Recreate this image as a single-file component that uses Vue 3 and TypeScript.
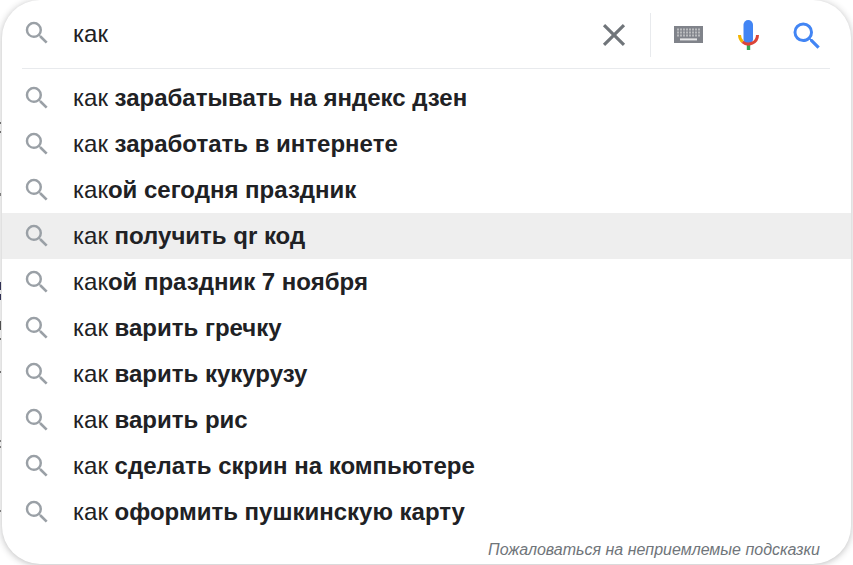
<script setup lang="ts">
interface Row { pre: string; bold: string; active?: boolean }
const rows: Row[] = [
  { pre: 'как ', bold: 'зарабатывать на яндекс дзен' },
  { pre: 'как ', bold: 'заработать в интернете' },
  { pre: 'как', bold: 'ой сегодня праздник' },
  { pre: 'как ', bold: 'получить qr код', active: true },
  { pre: 'как', bold: 'ой праздник 7 ноября' },
  { pre: 'как ', bold: 'варить гречку' },
  { pre: 'как ', bold: 'варить кукурузу' },
  { pre: 'как ', bold: 'варить рис' },
  { pre: 'как ', bold: 'сделать скрин на компьютере' },
  { pre: 'как ', bold: 'оформить пушкинскую карту' },
]
const glass = 'M15.5 14h-.79l-.28-.27A6.47 6.47 0 0 0 16 9.5 6.5 6.5 0 1 0 9.5 16c1.61 0 3.09-.59 4.23-1.57l.27.28v.79l5 4.99L20.49 19l-4.99-5zm-6 0C7.01 14 5 11.99 5 9.5S7.01 5 9.5 5 14 7.01 14 9.5 11.99 14 9.5 14z'
// Bits of the page behind the dropdown that peek out at its left edge
const specks = [
  { y: 122, h: 2, c: '#777' },
  { y: 131, h: 2, c: '#777' },
  { y: 193, h: 3, c: '#888' },
  { y: 282, h: 8, c: '#33335a' },
  { y: 294, h: 6, c: '#33335a' },
  { y: 321, h: 9, c: '#555' },
  { y: 338, h: 2, c: '#777' },
  { y: 371, h: 2, c: '#777' },
  { y: 440, h: 2, c: '#888' },
  { y: 446, h: 2, c: '#888' },
  { y: 510, h: 2, c: '#888' },
]
</script>

<template>
  <div class="page">
    <span
      v-for="s in specks"
      :key="s.y"
      class="speck"
      :style="{ top: s.y + 'px', height: s.h + 'px', background: s.c }"
    ></span>
    <div class="card">
      <div class="top">
        <div class="bar">
          <svg class="ico up" viewBox="0 0 24 24"><path :d="glass" fill="#9aa0a6" /></svg>
          <span class="query">как</span>
          <div class="tools">
            <svg class="clear" viewBox="0 0 24 24"><path fill="#70757a" d="M19 6.41 17.59 5 12 10.59 6.41 5 5 6.41 10.59 12 5 17.59 6.41 19 12 13.41 17.59 19 19 17.59 13.41 12z" /></svg>
            <span class="sep"></span>
            <svg class="kbd" viewBox="0 0 29 17">
              <rect width="29" height="17" fill="#80838a" />
              <g stroke="#b9bbbd" stroke-width="2" stroke-dasharray="2 1" fill="none">
                <path d="M3 3.5h23" />
                <path d="M3 6.5h23" />
                <path d="M3 9.5h23" />
              </g>
              <rect x="6" y="12.4" width="17" height="2" fill="#e4e5e6" />
            </svg>
            <svg class="mic" viewBox="0 0 21 30">
              <rect x="5.5" y="0" width="9.5" height="24" rx="4.75" fill="#4285f4" />
              <rect x="8.8" y="25" width="3.4" height="5" fill="#34a853" />
              <path d="M1.5 15A9 9 0 0 0 4.6 21.8" fill="none" stroke="#f4b400" stroke-width="3" />
              <path d="M4.6 21.8A9 9 0 0 0 19.5 15" fill="none" stroke="#db4437" stroke-width="3" />
            </svg>
            <svg class="go" viewBox="0 0 24 24"><path :d="glass" fill="#4285f4" /></svg>
          </div>
        </div>
        <div class="divider"></div>
      </div>
      <ul class="list">
        <li v-for="(r, i) in rows" :key="i" class="row" :class="{ active: r.active }">
          <svg class="ico" viewBox="0 0 24 24"><path :d="glass" fill="#9aa0a6" /></svg>
          <span class="label">{{ r.pre }}<b>{{ r.bold }}</b></span>
        </li>
      </ul>
      <div class="foot">Пожаловаться на неприемлемые подсказки</div>
    </div>
  </div>
</template>

<style>
html, body { margin: 0; padding: 0; background: #fff; overflow: hidden; }
</style>

<style scoped>
.page {
  position: relative;
  width: 853px;
  height: 565px;
  padding: 0 2px 1px 2px;
  box-sizing: border-box;
  font-family: "Liberation Sans", Arial, sans-serif;
  color: #202124;
  overflow: hidden;
}
.speck { position: absolute; left: 0; width: 1px; }
.card {
  position: relative;
  height: 100%;
  background: #fff;
  border-radius: 38px;
  box-shadow: 0 1px 7px rgba(32, 33, 36, 0.3);
  display: flex;
  flex-direction: column;
}
.top { height: 69px; padding: 0 21px 0 20px; box-sizing: border-box; }
.bar { height: 68px; display: flex; align-items: center; }
.divider { height: 1px; background: #e8eaed; }
.ico { width: 30px; height: 30px; flex: none; }
.ico.up { position: relative; top: -1px; }
.query { margin-left: 21px; font-size: 24px; }
.tools { margin-left: auto; margin-top: 1px; display: flex; align-items: center; }
.clear { width: 38px; height: 38px; display: block; }
.sep { width: 1px; height: 44px; background: #e8eaed; margin-left: 17px; }
.kbd { width: 29px; height: 17px; display: block; margin-left: 23px; }
.mic { width: 21px; height: 30px; display: block; margin-left: 35px; margin-top: 1px; }
.go { width: 36px; height: 36px; display: block; margin-left: 29.5px; margin-right: 5.5px; margin-top: 2px; }
.list { list-style: none; margin: 6px 0 0; padding: 0; }
.row { height: 46px; display: flex; align-items: center; padding-left: 20px; font-size: 24px; white-space: pre; }
.row.active { background: #eeeeee; }
.label { margin-left: 21px; }
.label b { font-weight: 700; }
.foot {
  height: 29px;
  padding: 4px 31px 0 0;
  box-sizing: border-box;
  text-align: right;
  font-size: 16px;
  font-style: italic;
  color: #70757a;
  line-height: 22px;
}
</style>
